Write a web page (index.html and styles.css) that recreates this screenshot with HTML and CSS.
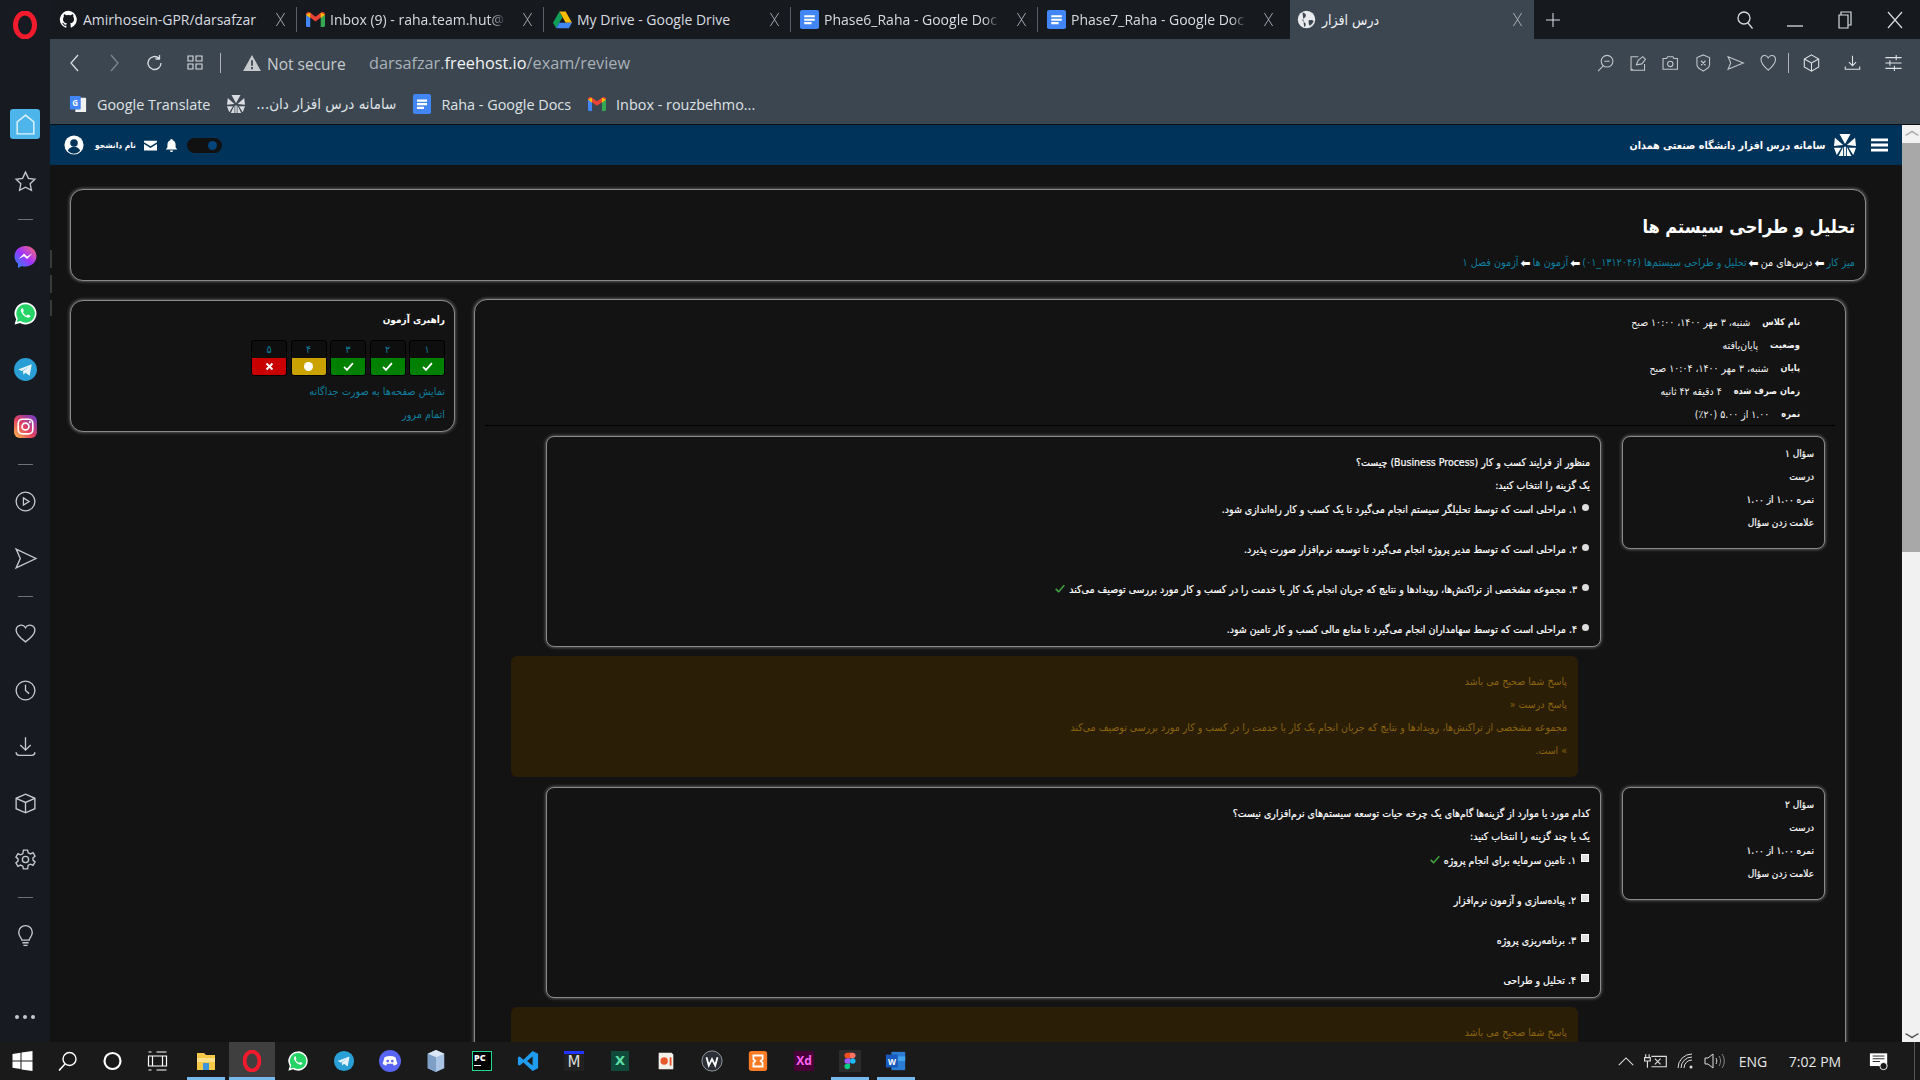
FILE: index.html
```html
<!DOCTYPE html>
<html lang="en">
<head>
<meta charset="utf-8">
<title>درس افزار</title>
<link rel="stylesheet" href="styles.css">
</head>
<body>
<svg class="defs" width="0" height="0" aria-hidden="true">
  <defs>
    <symbol id="x" viewBox="0 0 16 16" preserveAspectRatio="none"><path d="M2 1l12 14M14 1L2 15" fill="none" stroke="currentColor" stroke-width="1"/></symbol>
    <symbol id="docs" viewBox="0 0 18 22" preserveAspectRatio="none"><path d="M2 0h14a2 2 0 0 1 2 2v18a2 2 0 0 1-2 2H2a2 2 0 0 1-2-2V2a2 2 0 0 1 2-2z" fill="#4285f4"/><path d="M4 6h10v2.4H4zM4 10h10v2.4H4zM4 14h7v2.4H4z" fill="#fff"/></symbol>
    <symbol id="gmail" viewBox="0 0 20 16"><path d="M0 3v11a2 2 0 0 0 2 2h2.500V6z" fill="#4285f4"/><path d="M20 3v11a2 2 0 0 1-2 2h-2.500V6z" fill="#34a853"/><path d="M0 3c0-3 3-3.500 4.500-2L10 5l5.500-4C17-.5 20 0 20 3l-4.500 3L10 10 4.500 6z" fill="#ea4335"/><path d="M15.500 1L20 3l-4.500 3.500zM4.500 1L0 3l4.500 3.500z" fill="#fbbc04"/></symbol>
    <symbol id="logo" viewBox="0 0 24 24"><path d="M6 0h12l-6 11zM1 4l9 8-10 1zM23 4l-9 8 10 1zM5 24l5-10v10zM19 24l-5-10v10zM11 14h2v10h-2zM0 15l8 0-5 8zM24 15l-8 0 5 8z" fill="currentColor"/></symbol>
    <symbol id="check" viewBox="0 0 14 12"><path d="M1 6.500l4 4 8-9" fill="none" stroke="currentColor" stroke-width="2.400"/></symbol>
    <symbol id="opera" viewBox="0 0 24 28"><ellipse cx="12" cy="14" rx="9.500" ry="12" fill="none" stroke="#f21b2d" stroke-width="5"/></symbol>
    <symbol id="wa" viewBox="0 0 24 24"><path d="M12 1.500a10.500 10.500 0 0 0-9 15.900L1.500 22.500l5.300-1.400A10.500 10.500 0 1 0 12 1.500z" fill="#fff"/><path d="M12 3.200a8.800 8.800 0 0 0-7.400 13.500l-.9 3.500 3.600-.9A8.800 8.800 0 1 0 12 3.200z" fill="#25d366"/><path d="M8.500 7c-.8.500-1.300 1.700-.8 3 1 2.800 3.400 5 6 5.900 1.300.4 2.500-.2 3-1 .2-.4 0-.7-.3-.9l-1.800-.9c-.3-.1-.6 0-.8.200l-.6.800c-1.600-.6-3-1.900-3.700-3.400l.6-.7c.2-.2.2-.5.1-.8L9.500 7.300C9.300 7 8.900 6.800 8.500 7z" fill="#fff"/></symbol>
    <symbol id="tg" viewBox="0 0 24 24"><circle cx="12" cy="12" r="11" fill="#2a9fd6"/><path d="M5 12l13-5-2 11-4-3-2 2-.5-3.500L16 9l-7.500 4.500z" fill="#e8f4fa"/></symbol>
    <symbol id="insta" viewBox="0 0 24 24"><defs><linearGradient id="ig" x1="0" y1="1" x2="1" y2="0"><stop offset="0" stop-color="#fdc24e"/><stop offset=".45" stop-color="#e4405f"/><stop offset="1" stop-color="#6a3fd0"/></linearGradient></defs><rect x="1" y="1" width="22" height="22" rx="5.500" fill="url(#ig)"/><rect x="5" y="5" width="14" height="14" rx="4" fill="none" stroke="#fff" stroke-width="1.600"/><circle cx="12" cy="12" r="3.300" fill="none" stroke="#fff" stroke-width="1.600"/><circle cx="16.200" cy="7.800" r="1" fill="#fff"/></symbol>
  </defs>
</svg>

<div class="desktop">
  <aside class="rail">
    <svg class="rail-opera" viewBox="0 0 24 28"><use href="#opera"/></svg>
    <div class="rail-item rail-home"><svg viewBox="0 0 24 24"><path d="M12 3l8 6.500V21H4V9.500z" fill="none" stroke="#dff3fd" stroke-width="1.400"/></svg></div>
    <div class="rail-item"><svg viewBox="0 0 24 24"><path d="M12 3l2.800 6 6.200.800-4.500 4.400 1.200 6.300L12 17.500l-5.700 3 1.200-6.300L3 9.800 9.200 9z" fill="none" stroke="#c5c9ce" stroke-width="1.300"/></svg></div>
    <div class="rail-div"></div>
    <div class="rail-item"><svg viewBox="0 0 24 24"><defs><linearGradient id="ms" x1="0" y1="1" x2="1" y2="0"><stop offset="0" stop-color="#1f8cff"/><stop offset=".5" stop-color="#a033ff"/><stop offset="1" stop-color="#ff6d68"/></linearGradient></defs><path d="M12 2C6 2 1.500 6.300 1.500 11.800c0 2.900 1.200 5.400 3.300 7.100V23l3.700-2a11 11 0 0 0 3.500.500c6 0 10.500-4.300 10.500-9.700S18 2 12 2z" fill="url(#ms)"/><path d="M5.500 14.500l5-5.300 3 2.700 5-2.700-5 5.300-3-2.700z" fill="#fff"/></svg></div>
    <div class="rail-item"><svg viewBox="0 0 24 24"><use href="#wa"/></svg></div>
    <div class="rail-item"><svg viewBox="0 0 24 24"><use href="#tg"/></svg></div>
    <div class="rail-item"><svg viewBox="0 0 24 24"><use href="#insta"/></svg></div>
    <div class="rail-div"></div>
    <div class="rail-item"><svg viewBox="0 0 24 24"><circle cx="12" cy="12" r="9" fill="none" stroke="#c5c9ce" stroke-width="1.300"/><path d="M10 8.500l5.500 3.500-5.500 3.500z" fill="none" stroke="#c5c9ce" stroke-width="1.200"/></svg></div>
    <div class="rail-item"><svg viewBox="0 0 24 24"><path d="M3 3l19 9-19 9 4-9z" fill="none" stroke="#c5c9ce" stroke-width="1.300"/></svg></div>
    <div class="rail-div"></div>
    <div class="rail-item"><svg viewBox="0 0 24 24"><path d="M12 20C6 15.500 3 12.500 3 8.800A4.800 4.800 0 0 1 12 6.500a4.800 4.800 0 0 1 9 2.300c0 3.700-3 6.700-9 11.200z" fill="none" stroke="#c5c9ce" stroke-width="1.300"/></svg></div>
    <div class="rail-item"><svg viewBox="0 0 24 24"><circle cx="12" cy="12" r="9" fill="none" stroke="#c5c9ce" stroke-width="1.300"/><path d="M12 6.500V12l3.500 3" fill="none" stroke="#c5c9ce" stroke-width="1.300"/></svg></div>
    <div class="rail-item"><svg viewBox="0 0 24 24"><path d="M12 3v12M7 10.500l5 5 5-5M3 17.500c0 2 1 3 3 3h12c2 0 3-1 3-3" fill="none" stroke="#c5c9ce" stroke-width="1.300"/></svg></div>
    <div class="rail-item"><svg viewBox="0 0 24 24"><path d="M12 3l9 4v10l-9 4-9-4V7zM3 7l9 4 9-4M12 11v10" fill="none" stroke="#c5c9ce" stroke-width="1.300"/></svg></div>
    <div class="rail-item"><svg viewBox="0 0 24 24"><circle cx="12" cy="12" r="3" fill="none" stroke="#c5c9ce" stroke-width="1.300"/><path d="M10 3h4l.6 2.600 2.200 1 2.400-1.200 2 3.400-2 1.700v2.100l2 1.700-2 3.400-2.400-1.200-2.200 1L14 21h-4l-.6-2.600-2.200-1L4.800 18.600l-2-3.400 2-1.700v-2.100l-2-1.700 2-3.400 2.400 1.200 2.200-1z" fill="none" stroke="#c5c9ce" stroke-width="1.300"/></svg></div>
    <div class="rail-div"></div>
    <div class="rail-item"><svg viewBox="0 0 24 24"><path d="M8.500 16.500c0-2-3-3.500-3-7.500a6.500 6.500 0 0 1 13 0c0 4-3 5.500-3 7.500zM9 19h6M10 21.500h4" fill="none" stroke="#c5c9ce" stroke-width="1.300"/></svg></div>
    <div class="rail-dots"><i></i><i></i><i></i></div>
  </aside>

  <div class="browser">
    <div class="tabs">
      <div class="tab">
        <svg class="tab-ico" viewBox="0 0 24 24"><path d="M12 1a11 11 0 0 0-3.500 21.400c.6.100.8-.2.800-.5v-2c-3 .7-3.700-1.400-3.700-1.400-.5-1.300-1.200-1.600-1.200-1.600-1-.7.100-.7.100-.7 1.100.1 1.700 1.100 1.700 1.100 1 1.700 2.600 1.200 3.200.9.100-.7.400-1.200.7-1.500-2.400-.3-5-1.200-5-5.400 0-1.200.4-2.200 1.100-2.900-.1-.3-.5-1.400.1-2.900 0 0 .9-.3 3 1.100a10.500 10.500 0 0 1 5.500 0c2.100-1.400 3-1.100 3-1.100.6 1.500.2 2.600.1 2.900.7.700 1.100 1.700 1.100 2.900 0 4.200-2.600 5.100-5 5.400.4.300.7 1 .7 2v3c0 .3.200.6.800.5A11 11 0 0 0 12 1z" fill="#fff"/></svg>
        <span class="tab-title tab-full">Amirhosein-GPR/darsafzar</span>
        <svg class="tab-x"><use href="#x"/></svg>
      </div>
      <div class="tab">
        <svg class="tab-ico" viewBox="0 0 20 16"><use href="#gmail"/></svg>
        <span class="tab-title">Inbox (9) - raha.team.hut@</span>
        <svg class="tab-x"><use href="#x"/></svg>
      </div>
      <div class="tab">
        <svg class="tab-ico" viewBox="0 0 24 22"><path d="M8 1h8l8 14h-8z" fill="#fbbc04"/><path d="M8 1l4 7-8 14-4-7z" fill="#0f9d58"/><path d="M4 22l4-7h16l-4 7z" fill="#4285f4"/></svg>
        <span class="tab-title tab-full">My Drive - Google Drive</span>
        <svg class="tab-x"><use href="#x"/></svg>
      </div>
      <div class="tab">
        <svg class="tab-ico" viewBox="0 0 18 22" preserveAspectRatio="none"><use href="#docs"/></svg>
        <span class="tab-title">Phase6_Raha - Google Doc</span>
        <svg class="tab-x"><use href="#x"/></svg>
      </div>
      <div class="tab tab-last">
        <svg class="tab-ico" viewBox="0 0 18 22" preserveAspectRatio="none"><use href="#docs"/></svg>
        <span class="tab-title">Phase7_Raha - Google Doc</span>
        <svg class="tab-x"><use href="#x"/></svg>
      </div>
      <div class="tab tab-active">
        <svg class="tab-ico" viewBox="0 0 24 24"><circle cx="12" cy="12" r="11" fill="#e8eaed"/><path d="M7 3c3 1 5 2 4 5s-4 2-4 5 4 2 4 5-1 3-2 3M15 13c3-1 5 0 6 1-1 3-3 5-5 6-1-2-2-5-1-7z" fill="#3c4650"/></svg>
        <span class="tab-title-fa fa">درس افزار</span>
        <svg class="tab-x"><use href="#x"/></svg>
      </div>
      <svg class="tab-plus" viewBox="0 0 16 16"><path d="M8 0v16M0 8h16" fill="none" stroke="#d8dce0" stroke-width="1.200"/></svg>
      <div class="win-ctrl">
        <svg class="win-btn" viewBox="0 0 18 18"><circle cx="8" cy="7" r="6" fill="none" stroke="#d8dce0" stroke-width="1.300"/><path d="M12 12l4.500 5.500" stroke="#d8dce0" stroke-width="1.300"/></svg>
        <svg class="win-btn" viewBox="0 0 18 18"><path d="M1 15h16" stroke="#d8dce0" stroke-width="1.300"/></svg>
        <svg class="win-btn" viewBox="0 0 18 18"><path d="M5 4V1h10v13h-3M3 4h9v13H3z" fill="none" stroke="#d8dce0" stroke-width="1.200"/></svg>
        <svg class="win-btn" viewBox="0 0 18 18"><path d="M2 1l14 16M16 1L2 17" fill="none" stroke="#d8dce0" stroke-width="1.200"/></svg>
      </div>
    </div>

    <div class="toolbar">
      <div class="addr">
        <svg class="nav" viewBox="0 0 18 18"><path d="M12 1L5 9l7 8" fill="none" stroke="#d8dce0" stroke-width="1.300"/></svg>
        <svg class="nav nav-off" viewBox="0 0 18 18"><path d="M5 1l7 8-7 8" fill="none" stroke="#7d8791" stroke-width="1.300"/></svg>
        <svg class="nav" viewBox="0 0 18 18"><path d="M15 9a6.500 6.500 0 1 1-2-4.700M13.500 1v4h-4" fill="none" stroke="#d8dce0" stroke-width="1.300"/></svg>
        <svg class="nav" viewBox="0 0 18 18"><path d="M2 2h5v5H2zM10 2h6v5h-6zM2 10h5v5H2zM10 10h6v5h-6z" fill="none" stroke="#d8dce0" stroke-width="1.100"/></svg>
        <span class="addr-sep"></span>
        <svg class="warn" viewBox="0 0 20 18"><path d="M10 0l10 18H0z" fill="#c6cacd"/><path d="M9 6h2v6H9zM9 13.500h2V16H9z" fill="#3c4650"/></svg>
        <span class="not-secure">Not secure</span>
        <span class="url">darsafzar.<b>freehost.io</b>/exam/review</span>
        <div class="ext">
          <svg class="ext-ico" viewBox="0 0 20 20"><circle cx="12" cy="8" r="6.500"/><path d="M8 13l-6 6M9 8h6"/></svg>
          <svg class="ext-ico" viewBox="0 0 20 20"><path d="M10 3H2v15h15v-7M2 18l2-1M8 12l2-5 5-4 3 3-4 5z"/></svg>
          <svg class="ext-ico" viewBox="0 0 20 20"><path d="M2 5h4l1-2h6l1 2h4v12H2z"/><circle cx="10" cy="11" r="3"/></svg>
          <svg class="ext-ico" viewBox="0 0 20 20"><path d="M10 1l7 3v8c0 3-3 5-7 7-4-2-7-4-7-7V4zM7.500 7.500l5 5M12.500 7.500l-5 5"/></svg>
          <svg class="ext-ico" viewBox="0 0 20 20"><path d="M2 3l17 7-17 7 3-7z"/></svg>
          <svg class="ext-ico" viewBox="0 0 20 20"><path d="M10 18C4 13 2 10 2 6.500A4 4 0 0 1 10 5a4 4 0 0 1 8 1.500c0 3.500-2 6.500-8 11.500z"/></svg>
          <span class="ext-sep"></span>
          <svg class="ext-ico ext-wide" viewBox="0 0 20 20"><path d="M10 1l8 4.500v9L10 19l-8-4.500v-9zM2 5.500l8 4.500 8-4.500M10 10v9"/></svg>
          <svg class="ext-ico ext-wide" viewBox="0 0 20 20"><path d="M10 2v11M6 9l4 4 4-4M2 14v3h16v-3"/></svg>
          <svg class="ext-ico ext-wide" viewBox="0 0 20 20"><path d="M1 4h18M1 10h18M1 16h18M13 1v6M6 7v6M11 13v6"/></svg>
        </div>
      </div>
      <div class="bookmarks">
        <span class="bm">
          <svg class="bm-ico" viewBox="0 0 20 20"><rect x="7" y="3" width="12" height="16" rx="1" fill="#f1f1f1"/><rect x="1" y="1" width="12" height="15" rx="1" fill="#4285f4"/><text x="7" y="12" class="bm-g">G</text></svg>
          Google Translate
        </span>
        <span class="bm">
          <svg class="bm-ico bm-logo"><use href="#logo"/></svg>
          <span class="fa bm-fa" dir="rtl">سامانه درس افزار دان...</span>
        </span>
        <span class="bm">
          <svg class="bm-ico bm-doc" viewBox="0 0 18 22" preserveAspectRatio="none"><use href="#docs"/></svg>
          Raha - Google Docs
        </span>
        <span class="bm">
          <svg class="bm-ico" viewBox="0 0 20 16"><use href="#gmail"/></svg>
          Inbox - rouzbehmo...
        </span>
      </div>
    </div>

    <div class="viewport">
      <main class="page fa" dir="rtl">
        <header class="site-head">
          <svg class="burger" viewBox="0 0 18 14"><path d="M0 0h18v3H0zM0 5.500h18v3H0zM0 11h18v3H0z" fill="#fff"/></svg>
          <svg class="brand-logo"><use href="#logo"/></svg>
          <span class="brand">سامانه درس افزار دانشگاه صنعتی همدان</span>
          <div class="head-tools">
            <span class="toggle"><i></i></span>
            <svg class="hd-ico" viewBox="0 0 14 16"><path d="M7 0a1.500 1.500 0 0 1 1.500 1.500C11 2.300 12 4.500 12 7v3l2 3H0l2-3V7c0-2.500 1-4.700 3.500-5.500A1.500 1.500 0 0 1 7 0zM5 14h4a2 2 0 0 1-4 0z" fill="#fff"/></svg>
            <svg class="hd-ico" viewBox="0 0 16 14"><path d="M0 1h16v2L8 8 0 3zM0 5l8 5 8-5v8H0z" fill="#fff"/></svg>
            <span class="student">نام دانشجو</span>
            <svg class="hd-user" viewBox="0 0 24 24"><circle cx="12" cy="12" r="11.500" fill="#fff"/><circle cx="12" cy="9.500" r="4.500" fill="#00335a"/><path d="M4.500 19c1.500-3.500 4-5 7.500-5s6 1.500 7.500 5a10 10 0 0 1-15 0z" fill="#00335a"/></svg>
          </div>
        </header>

        <div class="content">
          <section class="card hero">
            <h1 class="hero-title">تحلیل و طراحی سیستم ها</h1>
            <nav class="crumbs"><a>میز کار</a><b>⬅</b><span>درس‌های من</span><b>⬅</b><a>تحلیل و طراحی سیستم‌ها (۱۳۱۲۰۴۶_۰۱)</a><b>⬅</b><a>آزمون ها</a><b>⬅</b><a>آزمون فصل ۱</a></nav>
          </section>

          <div class="columns">
            <section class="card review">
              <div class="summary">
                <div class="sum-row"><b>نام کلاس</b><span>شنبه، ۳ مهر ۱۴۰۰، ۱۰:۰۰ صبح</span></div>
                <div class="sum-row"><b>وضعیت</b><span>پایان‌یافته</span></div>
                <div class="sum-row"><b>پایان</b><span>شنبه، ۳ مهر ۱۴۰۰، ۱۰:۰۴ صبح</span></div>
                <div class="sum-row"><b>زمان صرف شده</b><span>۴ دقیقه ۴۲ ثانیه</span></div>
                <div class="sum-row"><b>نمره</b><span>۱.۰۰ از ۵.۰۰ (۲۰٪)</span></div>
              </div>
              <div class="rule"></div>

              <article class="question">
                <div class="card q-side">
                  <p class="q-line">سؤال ۱</p>
                  <p class="q-line">درست</p>
                  <p class="q-line">نمره ۱.۰۰ از ۱.۰۰</p>
                  <p class="q-line">علامت زدن سؤال</p>
                </div>
                <div class="q-main">
                  <div class="card q-body">
                    <p class="q-line">منظور از فرایند کسب و کار (Business Process) چیست؟</p>
                    <p class="q-line">یک گزینه را انتخاب کنید:</p>
                    <div class="opts">
                      <div class="opt"><i class="radio"></i>۱. مراحلی است که توسط تحلیلگر سیستم انجام می‌گیرد تا یک کسب و کار راه‌اندازی شود.</div>
                      <div class="opt"><i class="radio"></i>۲. مراحلی است که توسط مدیر پروژه انجام می‌گیرد تا توسعه نرم‌افزار صورت پذیرد.</div>
                      <div class="opt"><i class="radio"></i>۳. مجموعه مشخصی از تراکنش‌ها، رویدادها و نتایج که جریان انجام یک کار یا خدمت را در کسب و کار مورد بررسی توصیف می‌کند<svg class="tick" viewBox="0 0 14 12"><use href="#check"/></svg></div>
                      <div class="opt"><i class="radio"></i>۴. مراحلی است که توسط سهامداران انجام می‌گیرد تا منابع مالی کسب و کار تامین شود.</div>
                    </div>
                  </div>
                  <div class="feedback">
                    <p class="q-line">پاسخ شما صحیح می باشد</p>
                    <p class="q-line">پاسخ درست «</p>
                    <p class="q-line">مجموعه مشخصی از تراکنش‌ها، رویدادها و نتایج که جریان انجام یک کار یا خدمت را در کسب و کار مورد بررسی توصیف می‌کند</p>
                    <p class="q-line">» است.</p>
                  </div>
                </div>
              </article>

              <article class="question">
                <div class="card q-side">
                  <p class="q-line">سؤال ۲</p>
                  <p class="q-line">درست</p>
                  <p class="q-line">نمره ۱.۰۰ از ۱.۰۰</p>
                  <p class="q-line">علامت زدن سؤال</p>
                </div>
                <div class="q-main">
                  <div class="card q-body">
                    <p class="q-line">کدام مورد یا موارد از گزینه‌ها گام‌های یک چرخه حیات توسعه سیستم‌های نرم‌افزاری نیست؟</p>
                    <p class="q-line">یک یا چند گزینه را انتخاب کنید:</p>
                    <div class="opts">
                      <div class="opt"><i class="box"></i>۱. تامین سرمایه برای انجام پروژه<svg class="tick" viewBox="0 0 14 12"><use href="#check"/></svg></div>
                      <div class="opt"><i class="box"></i>۲. پیاده‌سازی و آزمون نرم‌افزار</div>
                      <div class="opt"><i class="box"></i>۳. برنامه‌ریزی پروژه</div>
                      <div class="opt"><i class="box"></i>۴. تحلیل و طراحی</div>
                    </div>
                  </div>
                  <div class="feedback">
                    <p class="q-line">پاسخ شما صحیح می باشد</p>
                  </div>
                </div>
              </article>
            </section>

            <aside class="card quiz-nav">
              <h2 class="nav-title">راهبری آزمون</h2>
              <div class="nav-grid">
                <div class="nav-cell"><span class="nav-num">۱</span><span class="nav-state s-ok"><svg viewBox="0 0 14 12"><use href="#check"/></svg></span></div>
                <div class="nav-cell"><span class="nav-num">۲</span><span class="nav-state s-ok"><svg viewBox="0 0 14 12"><use href="#check"/></svg></span></div>
                <div class="nav-cell"><span class="nav-num">۳</span><span class="nav-state s-ok"><svg viewBox="0 0 14 12"><use href="#check"/></svg></span></div>
                <div class="nav-cell"><span class="nav-num">۴</span><span class="nav-state s-part"><i></i></span></div>
                <div class="nav-cell"><span class="nav-num">۵</span><span class="nav-state s-bad"><svg viewBox="0 0 12 12"><path d="M2 2l8 8M10 2l-8 8" fill="none" stroke="#fff" stroke-width="2.600"/></svg></span></div>
              </div>
              <a class="nav-link">نمایش صفحه‌ها به صورت جداگانه</a>
              <a class="nav-link">اتمام مرور</a>
            </aside>
          </div>
        </div>
      </main>
      <div class="scrollbar">
        <span class="sb-btn sb-up"></span>
        <span class="sb-thumb"></span>
        <span class="sb-track"></span>
        <span class="sb-btn sb-down"></span>
      </div>
    </div>
  </div>

  <footer class="taskbar">
    <div class="task-sys">
      <svg viewBox="0 0 20 20"><path d="M0 3l8-1.200v7.600H0zM9 1.600L20 0v9.400H9zM0 10.400h8V18L0 16.800zM9 10.400h11V20L9 18.400z" fill="#fff"/></svg>
      <svg viewBox="0 0 20 20"><circle cx="12" cy="8" r="6.500" fill="none" stroke="#fff" stroke-width="1.400"/><path d="M7.500 13L1.500 19.500" stroke="#fff" stroke-width="1.600"/></svg>
      <svg viewBox="0 0 20 20"><circle cx="10" cy="10" r="8" fill="none" stroke="#fff" stroke-width="2.200"/></svg>
      <svg viewBox="0 0 20 20"><path d="M1 1h3M9 1h10M1 5h18v10H1zM5 5v10M15 5v10M1 19h3M9 19h10" fill="none" stroke="#fff" stroke-width="1.200"/></svg>
    </div>
    <div class="task-apps">
      <span class="app on"><svg viewBox="0 0 22 22"><path d="M2 3h7l2 2h9v15H2z" fill="#f7c948"/><path d="M2 8h18v4H2z" fill="#ffe08a"/><path d="M8 13h6v7H8z" fill="#3a96dd"/></svg></span>
      <span class="app on active"><svg viewBox="0 0 24 28"><use href="#opera"/></svg></span>
      <span class="app"><svg viewBox="0 0 24 24"><use href="#wa"/></svg></span>
      <span class="app"><svg viewBox="0 0 24 24"><use href="#tg"/></svg></span>
      <span class="app"><svg viewBox="0 0 24 24"><circle cx="12" cy="12" r="12" fill="#5865f2"/><path d="M6 8c4-2 8-2 12 0l2 7c-1 1-3 2-4 2l-1-2H9l-1 2c-1 0-3-1-4-2z" fill="#fff"/><circle cx="9.500" cy="12" r="1.500" fill="#5865f2"/><circle cx="14.500" cy="12" r="1.500" fill="#5865f2"/></svg></span>
      <span class="app"><svg viewBox="0 0 22 24"><path d="M11 0l9 4v16l-9 4-9-4V4z" fill="#a9c4e4"/><path d="M11 0l9 4-9 4-9-4z" fill="#dbe8f5"/><path d="M2 4l9 4v16l-9-4z" fill="#7e9fc6"/></svg></span>
      <span class="app"><span class="pc"><b>PC</b><i></i></span></span>
      <span class="app"><svg viewBox="0 0 24 24"><path d="M17 1l6 3v16l-6 3L7 13.500 3 17l-2-1V8l2-1 4 3.500zM17 7l-6 5 6 5z" fill="#1f9cf0"/></svg></span>
      <span class="app"><span class="mtile">M</span></span>
      <span class="app"><span class="xtile">X</span></span>
      <span class="app"><svg viewBox="0 0 22 24"><path d="M3 3h14l2 2v16H3z" fill="#f3efe9"/><circle cx="9" cy="12" r="4" fill="#e8572a"/><path d="M15 8h2v9h-2z" fill="#e8572a"/></svg></span>
      <span class="app"><svg viewBox="0 0 24 24"><circle cx="12" cy="12" r="11" fill="#2b2f36" stroke="#9aa0a8"/><path d="M6 8l2.500 9L12 10l3.500 7L18 8" fill="none" stroke="#fff" stroke-width="2"/></svg></span>
      <span class="app"><svg viewBox="0 0 24 24"><rect x="2" y="1" width="20" height="22" rx="3" fill="#fb7a24"/><path d="M7 6h10v4l-2 2 2 2v4H7v-4l2-2-2-2z" fill="none" stroke="#fff" stroke-width="2"/></svg></span>
      <span class="app"><span class="xd">Xd</span></span>
      <span class="app on"><svg viewBox="0 0 24 24"><rect width="24" height="24" fill="#2c2c2c"/><circle cx="15" cy="12" r="3" fill="#1abcfe"/><path d="M9 3h3v6H9a3 3 0 0 1 0-6z" fill="#f24e1e"/><path d="M12 3h3a3 3 0 0 1 0 6h-3z" fill="#ff7262"/><path d="M9 9h3v6H9a3 3 0 0 1 0-6z" fill="#a259ff"/><path d="M9 15h3v3a3 3 0 1 1-3-3z" fill="#0acf83"/></svg></span>
      <span class="app on"><svg viewBox="0 0 24 24"><path d="M7 2h15v20H7z" fill="#2b7cd3"/><path d="M7 7h15v5H7z" fill="#41a5ee"/><rect x="1" y="5" width="13" height="14" fill="#185abd"/><text x="7.500" y="16" class="word-w">W</text></svg></span>
    </div>
    <div class="tray">
      <svg class="tr-chev" viewBox="0 0 18 10"><path d="M1 9l8-8 8 8" fill="none" stroke="#ddd" stroke-width="1.200"/></svg>
      <svg class="tr-bat" viewBox="0 0 22 14"><path d="M2 1v3M5 1v3M1 4h5v3H1zM3.500 7v6M7 3h13v9H7" fill="none" stroke="#ddd" stroke-width="1"/><path d="M10 5l5 5M15 5l-5 5" stroke="#ddd"/></svg>
      <svg class="tr-wifi" viewBox="0 0 18 16"><path d="M1 15a14 14 0 0 1 14-14M4 15A11 11 0 0 1 15 4M7 15a8 8 0 0 1 8-8" fill="none" stroke="#ddd" stroke-width="1"/><circle cx="14" cy="14" r="1.500" fill="#ddd"/></svg>
      <svg class="tr-vol" viewBox="0 0 22 16"><path d="M1 5h3l5-4v14l-5-4H1zM12 5c1 2 1 4 0 6" fill="none" stroke="#ddd" stroke-width="1"/><path d="M15 3c2 3 2 7 0 10M18 1c3 4 3 10 0 14" fill="none" stroke="#888" stroke-width="1"/></svg>
      <span class="tr-lang">ENG</span>
      <span class="tr-time">7:02 PM</span>
      <span class="tr-notif"><svg viewBox="0 0 22 20"><path d="M1 1h19v14H1z" fill="#fff"/><path d="M4 4h13M4 7h13M4 10h8" stroke="#1a1a1a"/><circle cx="16" cy="15" r="4" fill="#1a1a1a" stroke="#fff"/></svg></span>
      <span class="tr-edge"></span>
    </div>
  </footer>
</div>
</body>
</html>
```

FILE: styles.css
```css
* { box-sizing: border-box; }
html, body { margin: 0; height: 100%; }
body { width: 1920px; height: 1080px; overflow: hidden; background: #131313; font-family: "Open Sans", "DejaVu Sans", sans-serif; color: #d8dce0; }
p, h1, h2 { margin: 0; }
.defs { position: absolute; }
.fa { font-family: "DejaVu Sans Condensed", "DejaVu Sans", sans-serif; }

.desktop { display: grid; grid-template-columns: 50px 1fr; grid-template-rows: 1042px 38px; height: 1080px; }

/* left rail */
.rail { background: #171b21; display: flex; flex-direction: column; align-items: center; position: relative; }
.rail::after { content: ""; position: absolute; left: 50px; top: 250px; width: 2px; height: 66px; background: repeating-linear-gradient(180deg, #3a3a3a 0 18px, transparent 18px 25px); }
.rail-opera { width: 24px; height: 28px; margin-top: 11px; flex: none; }
.rail-item { width: 50px; height: 56.500px; display: flex; align-items: center; justify-content: center; flex: none; }
.rail-item svg { width: 25px; height: 25px; }
.rail-home { width: 30px; height: 30px; margin: 70px 0 14px; background: #4db5ea; border-radius: 3px; }
.rail-div { width: 15px; height: 1px; background: #6b7076; margin: 9px 0; flex: none; }
.rail-dots { display: flex; gap: 4px; margin-top: 51px; }
.rail-dots i { width: 4px; height: 4px; border-radius: 50%; background: #c5c9ce; }

/* browser chrome */
.browser { display: flex; flex-direction: column; min-width: 0; }
.tabs { height: 39px; background: #16191e; display: flex; align-items: center; flex: none; }
.tab { width: 247px; height: 39px; display: flex; align-items: center; padding: 0 11px 0 9px; gap: 5px; background-image: linear-gradient(#5a5f66, #5a5f66); background-repeat: no-repeat; background-size: 1px 25px; background-position: right center; font-size: 14px; }
.tab-last { background-image: none; margin-right: 5px; }
.tab-active { width: 244px; background: #3c4650; color: #f1f3f5; padding-left: 7px; gap: 6px; }
.tab-ico { width: 19px; height: 19px; flex: none; }
.tab-title { flex: 1; min-width: 0; overflow: hidden; white-space: nowrap; -webkit-mask-image: linear-gradient(90deg, #000 90%, transparent); mask-image: linear-gradient(90deg, #000 90%, transparent); }
.tab-full { -webkit-mask-image: none; mask-image: none; }
.tab-title-fa { flex: 1; font-size: 14px; direction: rtl; text-align: left; white-space: nowrap; }
.tab-x { width: 11px; height: 15px; flex: none; margin-left: 10px; color: #c2c6cb; }
.tab-plus { width: 14px; height: 14px; margin-left: 12px; flex: none; }
.win-ctrl { margin-left: auto; display: flex; gap: 32px; padding-right: 16px; }
.win-btn { width: 18px; height: 18px; }

.toolbar { height: 86px; background: #3c4650; border-bottom: 1px solid #0d0f12; flex: none; display: flex; flex-direction: column; }
.addr { height: 47px; display: flex; align-items: center; padding-left: 5px; flex: none; }
.nav { width: 40px; height: 18px; flex: none; }
.addr-sep { width: 1px; height: 20px; background: #aeb4ba; margin: 0 22px 0 5px; flex: none; }
.warn { width: 18px; height: 16px; flex: none; margin-right: 6px; }
.not-secure { font-size: 15.500px; color: #c6cacd; width: 102px; white-space: nowrap; margin-top: 2px; }
.url { font-size: 16.300px; color: #a9b1b8; white-space: nowrap; }
.url b { font-weight: 400; color: #f1f3f5; }
.ext { margin-left: auto; display: flex; align-items: center; padding-right: 6px; }
.ext-ico { width: 32.500px; height: 18px; fill: none; stroke: #c0c5ca; stroke-width: 1.200; flex: none; }
.ext-wide { width: 41px; stroke: #dfe2e5; }
.ext-sep { width: 1px; height: 20px; background: #aeb4ba; margin: 0 2px 0 4px; flex: none; }

.bookmarks { height: 38px; display: flex; align-items: center; padding: 0 0 2px 19px; gap: 17px; font-size: 14.400px; color: #dfe2e5; }
.bm { display: inline-flex; align-items: center; gap: 10px; white-space: nowrap; }
.bm-ico { width: 18px; height: 18px; flex: none; }
.bm-doc { height: 20px; }
.bm-logo { color: #d8dce0; }
.bm-fa { font-size: 15px; width: 141px; }
.bm-g { font: 700 9px "Open Sans", sans-serif; fill: #fff; text-anchor: middle; }

/* page */
.viewport { flex: 1; min-height: 0; display: flex; overflow: hidden; }
.page { flex: 1; min-width: 0; overflow: hidden; background: #131313; color: #f2f2f2; font-size: 10.500px; }
.scrollbar { width: 18px; display: flex; flex-direction: column; background: #f1f1f1; flex: none; }
.sb-btn { height: 18px; flex: none; position: relative; }
.sb-btn::after { content: ""; position: absolute; left: 5px; top: 5px; width: 8px; height: 8px; border-left: 2px solid #a8a8a8; border-top: 2px solid #a8a8a8; transform: scaleY(.6) rotate(45deg); }
.sb-down::after { border-color: #505050; transform: scaleY(.6) rotate(225deg); }
.sb-thumb { height: 409px; background: #a8a8a8; flex: none; }
.sb-track { flex: 1; }

.site-head { height: 40px; background: #00335a; display: flex; align-items: center; padding: 0 14.500px 0 14px; color: #fff; }
.burger { width: 17px; height: 14px; flex: none; }
.brand-logo { width: 22px; height: 22px; margin: 0 15px 0 8px; color: #fff; flex: none; }
.brand { font-size: 10.700px; font-weight: 700; white-space: nowrap; }
.head-tools { margin-right: auto; display: flex; align-items: center; }
.toggle { width: 35px; height: 15px; background: #111; border-radius: 8px; display: block; padding: 3px 5px; margin-left: 9.500px; }
.toggle i { display: block; width: 9px; height: 9px; border-radius: 50%; background: #00447a; }
.hd-ico { width: 13px; height: 13px; margin-left: 8px; flex: none; }
.student { font-size: 8.400px; font-weight: 700; margin-left: 11px; white-space: nowrap; }
.hd-user { width: 20px; height: 20px; flex: none; }

.content { padding: 24px 36px 0 20px; width: 1852px; display: flex; flex-direction: column; }
.card { border: 1px solid #8a8a8a; border-radius: 13px; box-shadow: 0 0 3px 1px rgba(140,140,140,.55); background: #131313; }
.hero { height: 92px; padding: 22px 10px 0; margin-bottom: 18px; }
.hero-title { font-size: 18px; font-weight: 700; line-height: 30px; color: #fff; }
.crumbs { margin-top: 13px; display: flex; align-items: center; font-size: 10.700px; line-height: 16px; white-space: nowrap; }
.crumbs a { color: #0f7f9f; }
.crumbs b { color: #fff; font-size: 12px; margin: 0 2px; font-family: "DejaVu Sans", sans-serif; }
.columns { display: flex; align-items: flex-start; gap: 19px; padding-right: 20px; }

.review { width: 1372px; height: 760px; padding: 10px 0 0; flex: none; }
.summary { padding-right: 45px; }
.sum-row { height: 23px; display: flex; align-items: center; gap: 12px; white-space: nowrap; font-size: 10.400px; }
.sum-row b { font-weight: 700; font-size: 9.200px; }
.rule { height: 1px; background: #000; margin: 0 10px 10px 10px; }
.question { display: flex; align-items: flex-start; gap: 21px; padding-right: 20px; margin-bottom: 10px; }
.q-line { height: 23px; line-height: 23px; white-space: nowrap; }
.q-side { width: 203px; height: 113px; padding: 5px 10px 0 0; border-radius: 8px; flex: none; font-size: 10px; -webkit-text-stroke: .2px #fff; }
.q-main { width: 1055px; flex: none; }
.q-body { height: 211px; padding: 14px 10px 0 0; border-radius: 8px; -webkit-text-stroke: .2px #fff; color: #fff; }
.opts { display: flex; flex-direction: column; gap: 17px; }
.opt { height: 23px; display: flex; align-items: center; white-space: nowrap; }
.radio { width: 7px; height: 7px; border-radius: 50%; background: #dedede; margin: -3px 1px 0 5px; flex: none; }
.box { width: 8px; height: 8px; background: #dedede; border: 1px solid #fff; margin: -3px 1px 0 5px; flex: none; }
.tick { width: 10px; height: 9px; color: #3f9a3f; margin-right: 4px; flex: none; }
.feedback { width: 1067px; margin: 9px 23px 0 0; padding: 14px 11px 15px 0; border-radius: 6px; background: #2a1e07; color: #8a640d; }

.quiz-nav { width: 385px; height: 132px; padding: 8px 9px 0 0; flex: none; margin-top: 1px; }
.nav-title { font-size: 10px; font-weight: 700; line-height: 21px; color: #fff; }
.nav-grid { display: flex; gap: 3.500px; margin-top: 10px; }
.nav-cell { width: 36px; height: 36px; background: #0e0e0e; border: 1px solid #000; border-radius: 3px; overflow: hidden; display: flex; flex-direction: column; }
.nav-num { height: 17px; color: #0f7f9f; text-align: center; line-height: 17px; font-size: 10.500px; flex: none; }
.nav-state { flex: 1; display: flex; align-items: center; justify-content: center; color: #fff; }
.nav-state svg { width: 11px; height: 9px; }
.s-ok { background: #008000; }
.s-part { background: #c9a200; }
.s-part i { width: 9px; height: 9px; border-radius: 50%; background: #fff; }
.s-bad { background: #c80000; }
.nav-link { display: block; height: 23px; line-height: 23px; color: #0f7f9f; font-size: 10.800px; }
.nav-grid + .nav-link { margin-top: 4px; }

/* taskbar */
.taskbar { grid-column: 1 / -1; background: #1a1a1a; display: flex; align-items: stretch; color: #e6e6e6; }
.task-sys { display: flex; width: 183px; flex: none; }
.task-sys svg { width: 45px; height: 20px; align-self: center; flex: none; }
.task-apps { display: flex; flex: none; }
.app { width: 46px; height: 38px; display: flex; align-items: center; justify-content: center; flex: none; position: relative; }
.app svg { width: 22px; height: 22px; }
.app.active { background: #3f3f3f; }
.app.on::after { content: ""; position: absolute; left: 4px; right: 4px; bottom: 0; height: 3px; background: #76b9ed; }
.app.active::after { left: 0; right: 0; }
.pc { width: 20px; height: 20px; background: #000; border: 1px solid #21d789; display: block; color: #fff; font: 700 9px/10px "Open Sans", sans-serif; padding: 1px; }
.pc b { display: block; }
.pc i { display: block; width: 7px; height: 1px; background: #fff; margin-top: 2px; }
.mtile { width: 20px; height: 20px; background: #222; border-top: 3px solid #23f; color: #ddd; font: 400 15px/17px "DejaVu Sans", sans-serif; text-align: center; display: block; }
.xtile { width: 18px; height: 20px; background: #0f4a3a; color: #5fe0a8; font: 700 13px/20px "DejaVu Sans", sans-serif; text-align: center; display: block; }
.xd { width: 20px; height: 20px; background: #470137; color: #ff61f6; font: 700 12px/20px "Open Sans", sans-serif; text-align: center; display: block; }
.word-w { font: 700 9px "Open Sans", sans-serif; fill: #fff; text-anchor: middle; }
.tray { margin-left: auto; display: flex; align-items: center; font-size: 14px; padding-right: 5px; }
.tray svg { height: 16px; flex: none; }
.tray .tr-chev { width: 30px; height: 9px; }
.tr-bat { width: 30px; }
.tr-wifi { width: 30px; }
.tr-vol { width: 28px; }
.tr-lang { width: 48px; text-align: center; }
.tr-time { width: 76px; text-align: center; white-space: nowrap; }
.tr-notif { width: 52px; display: flex; justify-content: center; }
.tray .tr-notif svg { width: 20px; height: 19px; }
.tr-edge { width: 1px; height: 38px; background: #555; margin-left: 9px; }
```
